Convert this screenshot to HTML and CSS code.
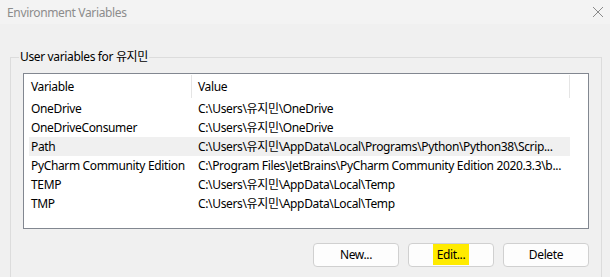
FILE: index.html
```html
<!DOCTYPE html>
<html>
<head>
<meta charset="UTF-8" /><title>Environment Variables</title>
<link rel="stylesheet" href="styles.css">
</head>
<body>
<div class="titlebar">
	<span class="title">Environment Variables</span>
	<svg class="close" width="12" height="12" viewBox="0 0 12 12"><path d="M1 1L11 11M11 1L1 11" stroke="#8a8a8a" stroke-width="1" fill="none"/></svg>
</div>
<fieldset class="group">
	<legend>User variables for 유지민</legend>
	<div class="list">
		<div class="head">
			<div class="col1">Variable</div>
			<div class="col2">Value</div>
		</div>
		<div class="row"><div class="col1">OneDrive</div><div class="col2">C:\Users\유지민\OneDrive</div></div>
		<div class="row"><div class="col1">OneDriveConsumer</div><div class="col2">C:\Users\유지민\OneDrive</div></div>
		<div class="row sel"><div class="col1">Path</div><div class="col2">C:\Users\유지민\AppData\Local\Programs\Python\Python38\Scrip...</div></div>
		<div class="row"><div class="col1">PyCharm Community Edition</div><div class="col2">C:\Program Files\JetBrains\PyCharm Community Edition 2020.3.3\b...</div></div>
		<div class="row"><div class="col1">TEMP</div><div class="col2">C:\Users\유지민\AppData\Local\Temp</div></div>
		<div class="row"><div class="col1">TMP</div><div class="col2">C:\Users\유지민\AppData\Local\Temp</div></div>
	</div>
	<div class="buttons">
		<span class="button">New...</span>
		<span class="button"><span class="mark">Edit...</span></span>
		<span class="button">Delete</span>
	</div>
</fieldset>
</body>
</html>
```

FILE: styles.css
```css
* {
	padding: 0px;
	margin: 0px;
	box-sizing: border-box;
}
body {
	width: 610px;
	height: 277px;
	overflow: hidden;
	background: #f0f0f0;
	font: 12px "Noto Sans", "Noto Sans CJK KR", sans-serif;
	letter-spacing: -0.35px;
	color: #000;
}

.titlebar {
	height: 24px;
	background: #f3f3f3;
	display: flex;
	align-items: center;
	justify-content: space-between;
	padding: 0 6px 0 7px;
}
.title {
	color: #8c8c8c;
	font-size: 12px;
}

.group {
	margin: 25px 8px 0 10px;
	border: 1px solid #dcdcdc;
	border-bottom: none;
	padding: 0 12px 0 12px;
	height: 228px;
}
.group legend {
	margin-left: -4px;
	padding: 0 1px;
	line-height: 16px;
}

.list {
	margin-top: 8px;
	height: 156px;
	border: 1px solid #828790;
	background: #fff;
}
.head {
	display: flex;
	height: 25px;
	align-items: center;
}
.head .col1, .head .col2 {
	border-right: 1px solid #e5e5e5;
	height: 23px;
	line-height: 23px;
}
.row {
	display: flex;
	height: 19px;
	line-height: 19px;
	margin-left: 5px;
	width: 541px;
}
.col1 {
	width: 168px;
	padding-left: 7px;
	white-space: nowrap;
	overflow: hidden;
}
.row .col1 {
	width: 163px;
	padding-left: 2px;
}
.col2 {
	width: 378px;
	padding-left: 6px;
	white-space: nowrap;
	overflow: hidden;
}
.sel {
	background: #f0f0f0;
}

.buttons {
	display: flex;
	justify-content: flex-end;
	gap: 9px;
	margin-top: 14px;
}
.button {
	width: 86px;
	height: 24px;
	line-height: 22px;
	text-align: center;
	background: #fdfdfd;
	border: 1px solid #d0d0d0;
	border-radius: 4px;
}
.mark {
	background: #ffeb00;
	padding: 2px 4px;
}
```
